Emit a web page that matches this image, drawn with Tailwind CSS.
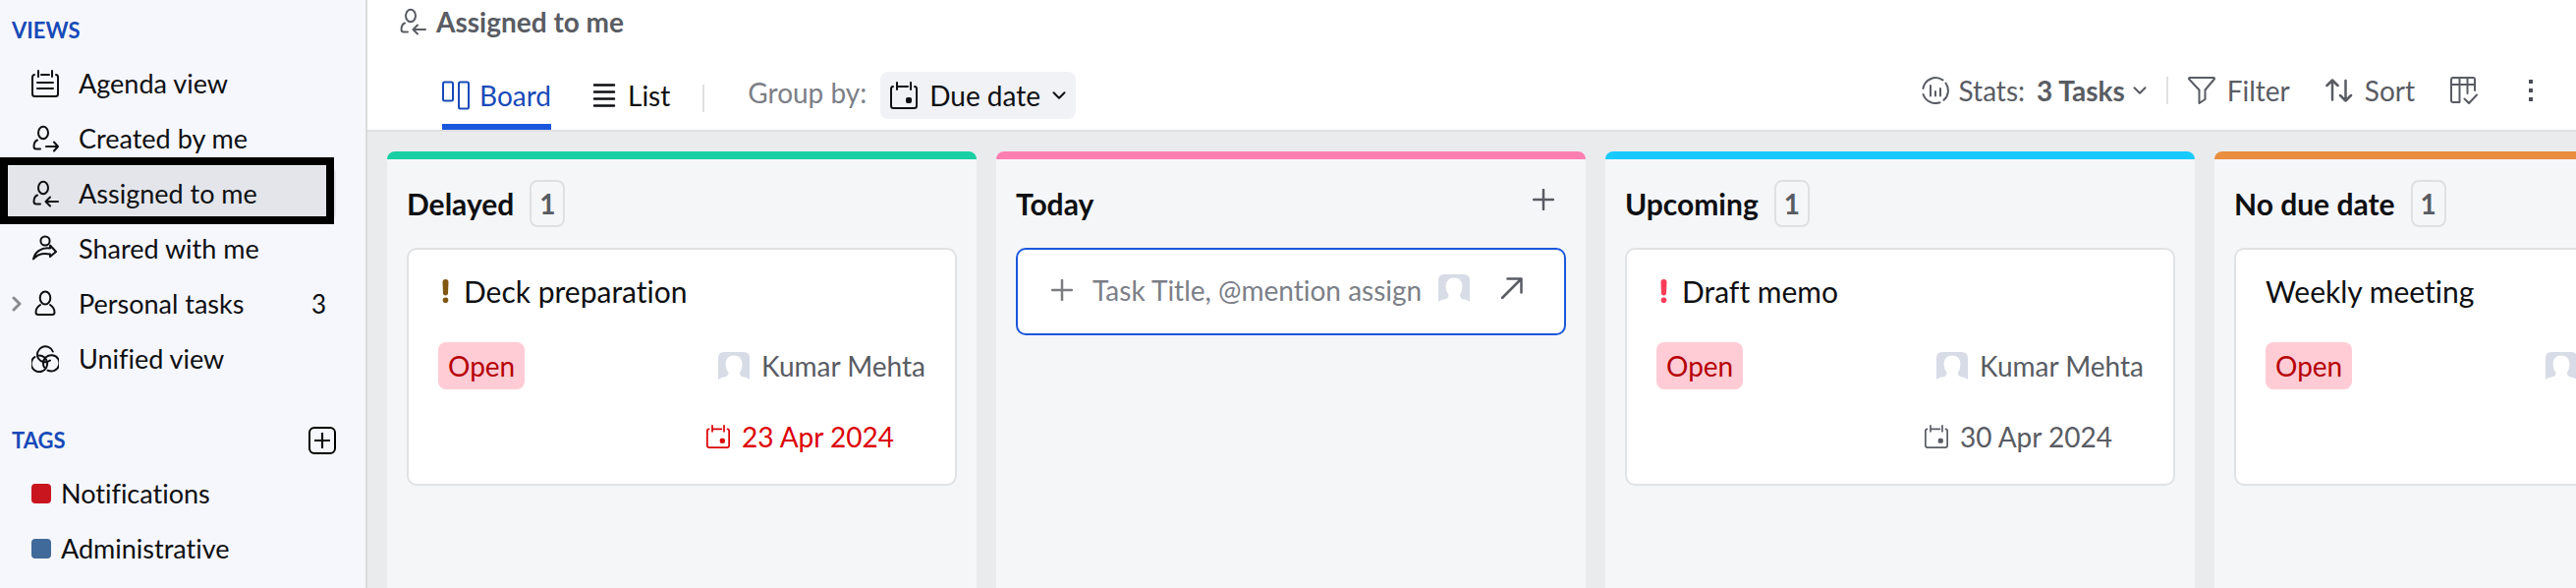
<!DOCTYPE html>
<html lang="en">
<head>
    <meta charset="UTF-8">
    <title>Assigned to me</title>
    <meta name="viewport" content="width=device-width, initial-scale=1.0">
    <script src="https://cdn.jsdelivr.net/npm/@tailwindcss/browser@4"></script>
</head>
<body class="min-h-screen flex overflow-x-hidden bg-white font-['Lato',sans-serif] text-[28px] leading-[36px] text-[#0e0f12] [font-variant-ligatures:none] [stroke-linecap:round] [stroke-linejoin:round] [&_svg]:fill-none [&_svg]:stroke-current">

    <!-- Icons -->
    <svg class="hidden">
        <symbol id="i-agenda" viewBox="0 0 28 28"><path d="M3 5Q1 5.400 1 7.500V24.500Q1 27 3.500 27H24.500Q27 27 27 24.500V7.500Q27 5 25 5M7 1V7M21 1V7M10 5H18M6 13H22M6 19H22"/></symbol>
        <symbol id="i-assigned" viewBox="0 0 28 28"><ellipse cx="12" cy="8" rx="5" ry="6.200"/><path d="M6 15.500C3.500 16.500 2.500 19.500 2.500 22Q2.500 24.500 5 24.500H9M15.500 22H27M19 17.500L14.500 22L19 26.500"/></symbol>
        <symbol id="i-created" viewBox="0 0 28 28"><ellipse cx="12" cy="8" rx="5" ry="6.200"/><path d="M6 15.500C3.500 16.500 2.500 19.500 2.500 22Q2.500 24.500 5 24.500H9M15 22H27M23 17.500L27 22L23 26.500"/></symbol>
        <symbol id="i-shared" viewBox="0 0 28 28"><circle cx="14" cy="6" r="4.600"/><path d="M2 24.500C3.500 17 10 12.500 19 13.500V10.500L25 17L19 22V19.500C12 18 6 19.500 2 24.500Z"/></symbol>
        <symbol id="i-person" viewBox="0 0 28 28"><ellipse cx="14" cy="8" rx="5.300" ry="6.500"/><path d="M9 15Q4.500 18 4.500 22.500Q4.500 25 7 25H21Q23.500 25 23.500 22.500Q23.500 18 19 15"/></symbol>
        <symbol id="i-unified" viewBox="0 0 28 28"><path d="M21.800 6.500A8.200 8.200 0 1 0 7 13.500A8.200 8.200 0 0 0 19 15.500M3.500 12A8.200 8.200 0 1 0 16 17.500A8.200 8.200 0 0 0 8 10.500M16.500 25.700A8.200 8.200 0 1 0 12 18.500Q12 21 13 22.500"/></symbol>
        <symbol id="i-board" viewBox="0 0 28 30"><rect x="1" y="1.500" width="10" height="19" rx="1.500"/><rect x="17" y="1.500" width="10" height="27" rx="1.500"/></symbol>
        <symbol id="i-list" viewBox="0 0 24 24"><path d="M2 1.500H22M2 8.500H22M2 15.500H22M2 22.500H22"/></symbol>
        <symbol id="i-calendar" viewBox="0 0 28 28"><path d="M3 5Q1 5 1 7.500V24.500Q1 27 3.500 27H24.500Q27 27 27 24.500V7.500Q27 5 25 5M7 1V8M21 1V8M7 5H18"/><rect x="17" y="17" width="4" height="4" rx="1" fill="currentColor"/></symbol>
        <symbol id="i-chevron" viewBox="0 0 14 8"><path d="M1.500 1.200L7 6.700L12.500 1.200"/></symbol>
        <symbol id="i-stats" viewBox="0 0 28 28"><path d="M21.500 3.400A13 13 0 0 0 1.400 12M1.600 18A13 13 0 0 0 18.500 26.200M22.500 23.800A13 13 0 0 0 24.500 6.500M9 9V19.500M14 15V19.500M19 12V19.500"/></symbol>
        <symbol id="i-filter" viewBox="0 0 28 28"><path d="M2 1H26Q27.500 1 26.800 2.500L17.500 13.500V23L11.500 27V13.500L1.200 2.500Q.5 1 2 1Z"/></symbol>
        <symbol id="i-sort" viewBox="0 0 28 28"><path d="M7 23.500V3.500M1.500 9L7 3.500L12.500 9M20.500 4V24.500M15 19L20.500 24.500L26 19"/></symbol>
        <symbol id="i-columns" viewBox="0 0 28 28"><path d="M9.500 26H3Q1 26 1 24V3Q1 1 3 1H23Q25 1 25 3V14M1 8H25M9.500 1V26M17.500 1V17M14.500 22.500L19 27L27 18.500"/></symbol>
        <symbol id="i-plus" viewBox="0 0 22 22"><path d="M11 1V21M1 11H21"/></symbol>
        <symbol id="i-open" viewBox="0 0 22 22"><path d="M1 21L20.500 1.500M6.500 1.500H20.500V15.500"/></symbol>
        <symbol id="i-avatar" viewBox="0 0 32 28"><path stroke="none" fill="#d8dce7" d="M0 28V6Q0 0 6 0H26Q32 0 32 6V28Q29 25.500 25 25.200Q22 24.500 22 21Q24.500 17 24.500 12Q24 3.500 16 3.500Q8 3.500 7.500 12Q7.500 17 10.500 21Q10.500 24.500 7 25.200Q3 25.500 0 28Z"/></symbol>
        <symbol id="i-priority" viewBox="0 0 8 24"><path stroke="none" fill="currentColor" d="M1 3Q1 0 4 0Q7 0 7 3L6.500 14.500Q6.300 16.500 4 16.500Q1.700 16.500 1.500 14.500Z"/><circle cx="4" cy="21.200" r="2.800" stroke="none" fill="currentColor"/></symbol>
    </svg>

    <!-- Sidebar -->
    <aside class="w-[374px] shrink-0 bg-[#f6f7fc] border-r-2 border-[#d9dadc] text-[27px]">
        <h2 class="pt-[15px] pl-3 pb-[10px] text-[22px] leading-[32px] font-bold text-[#184ab8]">VIEWS</h2>
        <nav class="flex flex-col" aria-label="Views">
            <a href="#" class="flex items-center h-14 pl-8 gap-5"><svg class="size-7" stroke-width="2"><use href="#i-agenda"/></svg>Agenda view</a>
            <a href="#" class="flex items-center h-14 pl-8 gap-5"><svg class="size-7" stroke-width="2"><use href="#i-created"/></svg>Created by me</a>
            <a href="#" aria-current="page" class="relative flex items-center h-14 pl-8 gap-5 mr-[30px] bg-[#e4e5ea] rounded-r-lg">
                <svg class="size-7" stroke-width="2"><use href="#i-assigned"/></svg>Assigned to me
                <span class="absolute left-0 right-0.5 -top-[9px] -bottom-[3px] border-8 border-black"></span>
            </a>
            <a href="#" class="flex items-center h-14 pl-8 gap-5"><svg class="size-7" stroke-width="2"><use href="#i-shared"/></svg>Shared with me</a>
            <a href="#" class="flex items-center h-14 pl-3 pr-10">
                <svg class="w-[10px] h-4 mr-[10px] text-[#8a8b8e]" viewBox="0 0 10 16" stroke-width="3"><path d="M2 2L8 8L2 14"/></svg>
                <svg class="size-7 mr-5" stroke-width="2"><use href="#i-person"/></svg>Personal tasks
                <span class="ml-auto text-[26px]">3</span>
            </a>
            <a href="#" class="flex items-center h-14 pl-8 gap-5"><svg class="size-7" stroke-width="2"><use href="#i-unified"/></svg>Unified view</a>
        </nav>
        <div class="flex items-center justify-between mt-8 pl-3 pr-[30px] h-[46px]">
            <h2 class="text-[22px] leading-[32px] font-bold text-[#184ab8]">TAGS</h2>
            <button aria-label="Add tag" class="size-7 flex items-center justify-center border-2 border-black rounded-md"><svg class="size-4" stroke-width="3"><use href="#i-plus" width="16" height="16"/></svg></button>
        </div>
        <nav class="flex flex-col pt-[3px]" aria-label="Tags">
            <a href="#" class="flex items-center h-14 pl-8 gap-[10px]"><span class="size-5 rounded bg-[#c9151e]"></span>Notifications</a>
            <a href="#" class="flex items-center h-14 pl-8 gap-[10px]"><span class="size-5 rounded bg-[#3f6a9a]"></span>Administrative</a>
        </nav>
    </aside>

    <main class="flex-1 min-w-0 flex flex-col">
        <header class="h-[134px] shrink-0 flex flex-col justify-between border-b-2 border-[#dfe0e2]">
            <h1 class="flex items-center gap-[10px] pl-8 pt-1 font-bold text-[#595c63]">
                <svg class="size-7" stroke-width="2"><use href="#i-assigned"/></svg>Assigned to me
            </h1>
            <!-- Toolbar -->
            <div class="flex items-start h-[68px] pl-[76px] pr-8">
                <button class="flex items-center gap-[10px] h-full pt-2 pb-1 text-[#184ab8] border-b-[6px] border-[#1a57dc]">
                    <svg class="w-7 h-[30px]" stroke-width="2"><use href="#i-board"/></svg>Board
                </button>
                <button class="flex items-center gap-3 h-[62px] pt-2 pb-1 ml-[42px]">
                    <svg class="size-6" stroke-width="2.500"><use href="#i-list"/></svg>List
                </button>
                <span class="w-0.5 h-7 mt-[22px] ml-[33px] bg-[#dfe0e2]"></span>
                <label for="group-by" class="mt-2 ml-[44px] py-1 text-[#7c7f88]">Group by:</label>
                <div class="relative flex items-center mt-[9px] ml-[14px] h-12 rounded-lg bg-[#f1f2f5]">
                    <svg class="absolute left-[10px] size-7 pointer-events-none" stroke-width="2"><use href="#i-calendar"/></svg>
                    <select id="group-by" class="appearance-none h-12 pl-[50px] pr-9 bg-transparent">
                        <option>Due date</option>
                        <option>Status</option>
                        <option>Priority</option>
                    </select>
                    <svg class="absolute right-[10px] w-[14px] h-2 pointer-events-none" stroke-width="2"><use href="#i-chevron"/></svg>
                </div>

                <div class="flex items-center ml-auto mt-[6px] h-11 text-[#595c63]">
                    <button class="flex items-center">
                        <svg class="size-7 mr-[10px]" stroke-width="2"><use href="#i-stats"/></svg>
                        Stats: <b class="ml-3 mr-2">3 Tasks</b>
                        <svg class="w-[14px] h-2" stroke-width="2"><use href="#i-chevron"/></svg>
                    </button>
                    <span class="w-0.5 h-7 mx-5 bg-[#dfe0e2]"></span>
                    <button class="flex items-center gap-3"><svg class="size-7" stroke-width="2"><use href="#i-filter"/></svg>Filter</button>
                    <button class="flex items-center gap-3 ml-9"><svg class="size-7" stroke-width="2.500"><use href="#i-sort"/></svg>Sort</button>
                    <button aria-label="Columns" class="ml-9"><svg class="size-7" stroke-width="2"><use href="#i-columns"/></svg></button>
                    <button aria-label="More" class="flex flex-col items-center gap-[5px] w-7 ml-10">
                        <span class="size-1 bg-[#4b4e55]"></span><span class="size-1 bg-[#4b4e55]"></span><span class="size-1 bg-[#4b4e55]"></span>
                    </button>
                </div>
            </div>
        </header>

        <!-- Board -->
        <div class="flex-1 flex gap-5 pl-5 pt-5 overflow-hidden bg-[#eaebed]">
            <section class="w-[600px] shrink-0 rounded-t-lg overflow-hidden bg-[#f5f6f8]">
                <div class="h-2 bg-[#17cfa2]"></div>
                <div class="flex items-center gap-4 h-[90px] px-5">
                    <h2 class="text-[30px] font-bold">Delayed</h2>
                    <span class="w-9 h-12 flex items-center justify-center border-2 border-[#dfe0e2] rounded-lg font-bold text-[#595c63]">1</span>
                </div>
                <article class="mx-5 h-[242px] px-[30px] pt-[22px] bg-white border-2 border-[#e1e2e3] rounded-[10px]">
                    <h3 class="flex items-center gap-[11px] h-10 text-[30px]"><svg class="w-[15px] h-6 text-[#815711]"><use href="#i-priority"/></svg>Deck preparation</h3>
                    <div class="flex items-center justify-between mt-8">
                        <span class="h-12 px-[10px] flex items-center rounded-lg bg-[#ffccd5] text-[#b50005]">Open</span>
                        <span class="flex items-center gap-3 text-[#595c63]"><svg class="w-8 h-7"><use href="#i-avatar"/></svg>Kumar Mehta</span>
                    </div>
                    <time class="flex items-center justify-end gap-3 mt-[30px] pr-8 text-[#dc0005]"><svg class="size-6" stroke-width="2"><use href="#i-calendar"/></svg>23 Apr 2024</time>
                </article>
            </section>

            <section class="w-[600px] shrink-0 rounded-t-lg overflow-hidden bg-[#f5f6f8]">
                <div class="h-2 bg-[#ff7fb2]"></div>
                <div class="flex items-center justify-between h-[90px] pl-5 pr-8">
                    <h2 class="text-[30px] font-bold">Today</h2>
                    <button aria-label="Add task" class="pb-2 text-[#595c63]"><svg class="size-[22px]" stroke-width="2.500"><use href="#i-plus"/></svg></button>
                </div>
                <form class="flex items-center mx-5 h-[89px] pl-[34px] pr-[42px] pb-1 bg-white border-2 border-[#1a57dc] rounded-[10px]">
                    <svg class="size-[22px] shrink-0 text-[#7c7d80]" stroke-width="2.500"><use href="#i-plus"/></svg>
                    <input type="text" aria-label="Task title" placeholder="Task Title, @mention assign" class="flex-1 min-w-0 ml-5 mr-3 outline-none placeholder:text-[#7c7f88]">
                    <svg class="w-8 h-7 shrink-0 mb-1"><use href="#i-avatar"/></svg>
                    <button type="button" aria-label="Open task form" class="ml-8 mb-1 text-[#595c63]"><svg class="size-[22px]" stroke-width="2.500"><use href="#i-open"/></svg></button>
                </form>
            </section>

            <section class="w-[600px] shrink-0 rounded-t-lg overflow-hidden bg-[#f5f6f8]">
                <div class="h-2 bg-[#18caff]"></div>
                <div class="flex items-center gap-4 h-[90px] px-5">
                    <h2 class="text-[30px] font-bold">Upcoming</h2>
                    <span class="w-9 h-12 flex items-center justify-center border-2 border-[#dfe0e2] rounded-lg font-bold text-[#595c63]">1</span>
                </div>
                <article class="mx-5 h-[242px] px-[30px] pt-[22px] bg-white border-2 border-[#e1e2e3] rounded-[10px]">
                    <h3 class="flex items-center gap-[11px] h-10 text-[30px]"><svg class="w-[15px] h-6 text-[#fb3c57]"><use href="#i-priority"/></svg>Draft memo</h3>
                    <div class="flex items-center justify-between mt-8">
                        <span class="h-12 px-[10px] flex items-center rounded-lg bg-[#ffccd5] text-[#b50005]">Open</span>
                        <span class="flex items-center gap-3 text-[#595c63]"><svg class="w-8 h-7"><use href="#i-avatar"/></svg>Kumar Mehta</span>
                    </div>
                    <time class="flex items-center justify-end gap-3 mt-[30px] pr-8 text-[#595c63]"><svg class="size-6" stroke-width="2"><use href="#i-calendar"/></svg>30 Apr 2024</time>
                </article>
            </section>

            <section class="w-[600px] shrink-0 rounded-t-lg overflow-hidden bg-[#f5f6f8]">
                <div class="h-2 bg-[#e98d3f]"></div>
                <div class="flex items-center gap-4 h-[90px] px-5">
                    <h2 class="text-[30px] font-bold">No due date</h2>
                    <span class="w-9 h-12 flex items-center justify-center border-2 border-[#dfe0e2] rounded-lg font-bold text-[#595c63]">1</span>
                </div>
                <article class="mx-5 h-[242px] px-[30px] pt-[22px] bg-white border-2 border-[#e1e2e3] rounded-[10px]">
                    <h3 class="flex items-center h-10 text-[30px]">Weekly meeting</h3>
                    <div class="flex items-center justify-between mt-8">
                        <span class="h-12 px-[10px] flex items-center rounded-lg bg-[#ffccd5] text-[#b50005]">Open</span>
                        <span class="flex items-center gap-3 text-[#595c63]"><svg class="w-8 h-7"><use href="#i-avatar"/></svg>Kumar Mehta</span>
                    </div>
                </article>
            </section>
        </div>
    </main>
</body>
</html>
